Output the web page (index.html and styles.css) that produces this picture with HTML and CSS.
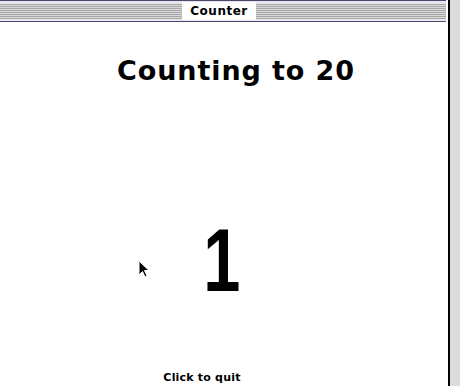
FILE: index.html
```html
<!DOCTYPE html>
<html>
<head>
<meta charset="utf-8">
<link rel="stylesheet" href="styles.css">
</head>
<body>
<div class="window">
  <div class="titlebar">
    <span class="title">Counter</span>
  </div>
  <div class="content">
    <h1 class="heading">Counting to 20</h1>
    <div class="middle">
      <div class="number">1</div>
      <svg class="cursor" width="12" height="19" viewBox="0 0 12 19">
        <path d="M1 1 L1 15 L4.5 11.5 L7 17 L9 16 L6.5 10.5 L11 10.5 Z" fill="#000" stroke="#fff" stroke-width="1"/>
      </svg>
    </div>
    <div class="footer">Click to quit</div>
  </div>
</div>
</body>
</html>
```
FILE: styles.css
```css
html, body {
  margin: 0;
  padding: 0;
}
body {
  width: 460px;
  height: 386px;
  background: #dcdcdc;
  overflow: hidden;
  font-family: "DejaVu Sans", "Liberation Sans", sans-serif;
}
.window {
  width: 448px;
  height: 386px;
  border-right: 2px solid #000;
  background: #fff;
  display: flex;
  flex-direction: column;
}
.titlebar {
  height: 20px;
  border-top: 1px solid #4a4a6a;
  border-bottom: 1px solid #4a4a6a;
  background:
    repeating-linear-gradient(to bottom, #a8a8a8 0 1px, #d8d8d8 1px 2px) 0 3px / 100% 15px no-repeat,
    #e6e6f0;
  display: flex;
  justify-content: center;
  align-items: center;
  margin-right: 2px;
}
.title {
  background: #fff;
  font-weight: bold;
  font-size: 12px;
  padding: 0 8px;
  height: 18px;
  line-height: 18px;
  letter-spacing: 0.5px;
  color: #000;
  transform: translateX(-4px);
}
.content {
  flex: 1;
  display: flex;
  flex-direction: column;
  align-items: center;
  position: relative;
}
.heading {
  margin: 32px 0 0 0;
  font-size: 27px;
  font-weight: bold;
  letter-spacing: 0.9px;
  line-height: 34px;
  transform: translateX(12px);
}
.middle {
  position: relative;
  margin-top: 128px;
}
.number {
  font-family: "Liberation Sans", sans-serif;
  font-size: 89px;
  font-weight: bold;
  line-height: 88px;
  transform: translateX(-2px) scaleX(0.75);
}
.cursor {
  position: absolute;
  left: -61px;
  top: 44px;
}
.footer {
  margin-top: auto;
  margin-bottom: 2px;
  font-size: 11px;
  font-weight: bold;
  line-height: 13px;
  letter-spacing: 0.2px;
  transform: translateX(-22px);
}
```
